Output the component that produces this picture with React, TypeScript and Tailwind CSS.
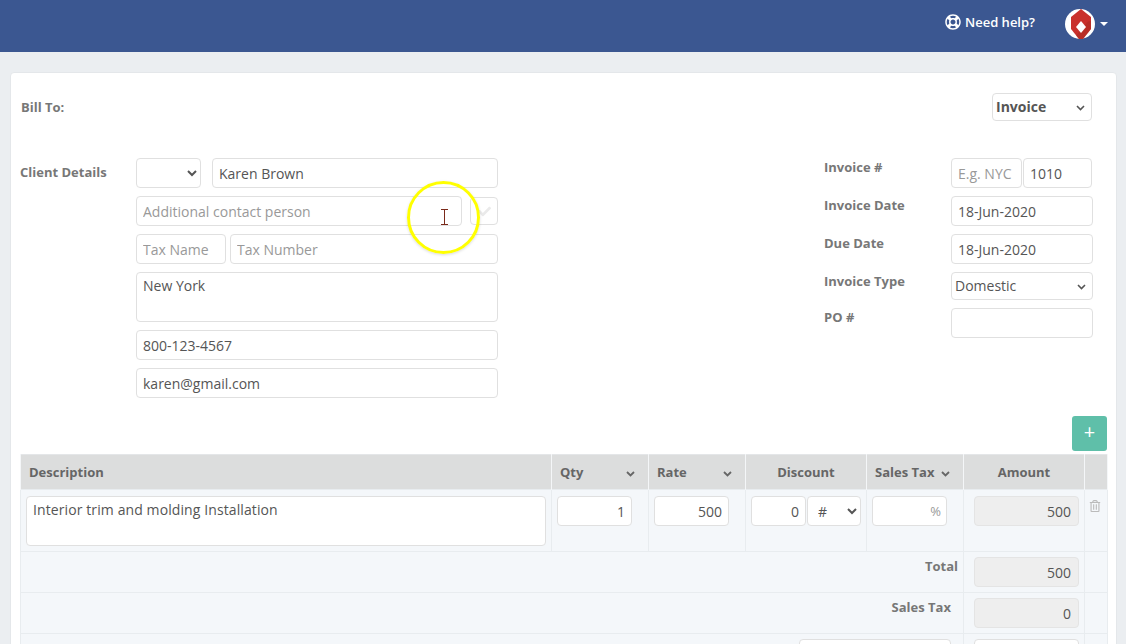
import { FaCheck, FaRegLifeRing, FaRegTrashAlt } from 'react-icons/fa';

const inputBase =
  'h-[30px] rounded-[4px] border border-[#e0e0e0] bg-white px-[6px] text-[14px] text-[#555] outline-none placeholder:text-[#999]';
const selectBase =
  'rounded-[4px] border border-[#e0e0e0] bg-white text-[14px] text-[#555] outline-none';
const amountBox =
  'ml-auto block h-[30px] w-[105px] rounded-[4px] border border-[#e4e4e4] bg-[#eeeeee] px-[7px] text-right text-[14px] text-[#555] outline-none';
const labelText = 'text-[13px] font-bold text-[#777]';
const th = 'h-[35px] border-x border-[#f4f6f8] bg-[#dcdddd] p-0 pt-[1px] text-[13px] font-bold text-[#666]';
const td = 'border border-[#e8ecef] align-top';

function SortArrow() {
  return (
    <svg width="9" height="6" viewBox="0 0 9 6" className="mt-[2px]">
      <path d="M1 1l3.5 3.5L8 1" fill="none" stroke="#666" strokeWidth="1.8" />
    </svg>
  );
}

function Logo() {
  return (
    <svg width="30" height="30" viewBox="0 0 30 30">
      <circle cx="15" cy="15" r="15" fill="#fff" />
      <path d="M16 0l10 8v12l-8 10h-4L6 20V8z" fill="#c9302c" />
      <path d="M26 12v8l-8 10h-4l-3-3.500 12-14z" fill="#a92b22" opacity="0.55" />
      <path d="M16 12l5 6-5 6-5-6z" fill="#fff" />
    </svg>
  );
}

function SmallSelect({ value, className }: { value: string; className: string }) {
  return (
    <div className="relative">
      <select
        className={`${selectBase} ${className} appearance-none pb-[2px] pl-[3px]`}
        defaultValue={value}
      >
        <option>{value}</option>
      </select>
      <svg
        width="9"
        height="6"
        viewBox="0 0 9 6"
        className="pointer-events-none absolute right-[7px] top-[12px]"
      >
        <path d="M1 1l3.5 3.5L8 1" fill="none" stroke="#555" strokeWidth="1.6" />
      </svg>
    </div>
  );
}

function RightRow({ label, children }: { label: string; children: React.ReactNode }) {
  return (
    <div className="flex">
      <div className={`w-[127px] ${labelText}`}>{label}</div>
      {children}
    </div>
  );
}

export default function App() {
  return (
    <div className="h-screen overflow-hidden bg-[#ebeef1] font-['Open_Sans',sans-serif]">
      {/* Top bar */}
      <header className="flex h-[52px] items-center justify-end bg-[#3b5791] pr-[18px] text-white">
        <a className="mr-[30px] flex items-center gap-[4px] pb-[7px] text-[13px] font-semibold">
          <FaRegLifeRing className="-mt-[2px] text-[16px]" />
          Need help?
        </a>
        <div className="flex items-center gap-[5px] pb-[4px]">
          <Logo />
          <svg width="8" height="4" viewBox="0 0 8 4">
            <path d="M0 0h8L4 4z" fill="#fff" />
          </svg>
        </div>
      </header>

      <main className="ml-[10px] mr-[9px] mt-[20px] rounded-[4px] border border-[#e4e7ea] bg-white pl-[9px] pr-[9px] pt-[20px]">
        <div className="flex h-[28px] items-center justify-between pr-[15px]">
          <span className={`pl-[1px] pt-[2px] ${labelText}`}>Bill To:</span>
          <SmallSelect value="Invoice" className="h-[28px] w-[100px] font-bold" />
        </div>

        <div className="mt-[37px] flex justify-between pr-[14px]">
          {/* Client details */}
          <div className="flex">
            <div className={`w-[116px] pt-[5px] ${labelText}`}>Client Details</div>
            <div className="flex w-[362px] flex-col gap-[8px]">
              <div className="flex gap-[11px]">
                <select className={`${selectBase} h-[30px] w-[65px]`} />
                <input className={`${inputBase} flex-1`} defaultValue="Karen Brown" />
              </div>
              <div className="flex items-center gap-[8px]">
                <input className={`${inputBase} w-[326px]`} placeholder="Additional contact person" />
                <div className="flex h-[28px] w-[28px] items-center justify-center rounded-[4px] border border-[#e0e0e0]">
                  <FaCheck className="text-[13px] text-[#eaeaea]" />
                </div>
              </div>
              <div className="flex gap-[4px]">
                <input className={`${inputBase} w-[90px]`} placeholder="Tax Name" />
                <input className={`${inputBase} flex-1`} placeholder="Tax Number" />
              </div>
              <textarea className={`${inputBase} h-[50px] resize-none py-[2px]`} defaultValue="New York" />
              <input className={inputBase} defaultValue="800-123-4567" />
              <input className={inputBase} defaultValue="karen@gmail.com" />
            </div>
          </div>

          {/* Invoice details */}
          <div className="flex w-[269px] flex-col gap-[8px]">
            <RightRow label="Invoice #">
              <div className="flex gap-px">
                <input className={`${inputBase} w-[71px]`} placeholder="E.g. NYC" />
                <input className={`${inputBase} w-[69px]`} defaultValue="1010" />
              </div>
            </RightRow>
            <RightRow label="Invoice Date">
              <input className={`${inputBase} w-[142px]`} defaultValue="18-Jun-2020" />
            </RightRow>
            <RightRow label="Due Date">
              <input className={`${inputBase} w-[142px]`} defaultValue="18-Jun-2020" />
            </RightRow>
            <RightRow label="Invoice Type">
              <SmallSelect value="Domestic" className="h-[28px] w-[142px]" />
            </RightRow>
            <RightRow label="PO #">
              <input className={`${inputBase} w-[142px]`} />
            </RightRow>
          </div>
        </div>

        <div className="mt-[18px] flex justify-end">
          <button className="flex h-[35px] w-[35px] items-center justify-center rounded-[3px] bg-[#5fbfa9] pb-[3px] text-[20px] text-white">
            +
          </button>
        </div>

        {/* Line items */}
        <table className="mt-[3px] w-[1087px] table-fixed border-collapse border-t border-[#e4e6e8] bg-[#f4f7fa]">
          <colgroup>
            <col className="w-[531px]" />
            <col className="w-[97px]" />
            <col className="w-[97px]" />
            <col className="w-[121px]" />
            <col className="w-[97px]" />
            <col className="w-[121px]" />
            <col className="w-[23px]" />
          </colgroup>
          <thead>
            <tr>
              <th className={`${th} pl-[8px] text-left`}>Description</th>
              <th className={th}>
                <div className="flex items-center justify-between pl-[8px] pr-[13px]">
                  Qty <SortArrow />
                </div>
              </th>
              <th className={th}>
                <div className="flex items-center justify-between pl-[8px] pr-[13px]">
                  Rate <SortArrow />
                </div>
              </th>
              <th className={th}>Discount</th>
              <th className={th}>
                <div className="flex items-center justify-between pl-[8px] pr-[13px]">
                  Sales Tax <SortArrow />
                </div>
              </th>
              <th className={th}>Amount</th>
              <th className={th} />
            </tr>
          </thead>
          <tbody>
            <tr className="h-[62px]">
              <td className={`${td} px-[5px] pt-[6px]`}>
                <textarea
                  className={`${inputBase} block h-[50px] w-full resize-none py-[2px] tracking-[0.1px]`}
                  defaultValue="Interior trim and molding Installation"
                />
              </td>
              <td className={`${td} pl-[5px] pt-[6px]`}>
                <input className={`${inputBase} block w-[75px] text-right`} defaultValue="1" />
              </td>
              <td className={`${td} pl-[5px] pt-[6px]`}>
                <input className={`${inputBase} block w-[75px] text-right`} defaultValue="500" />
              </td>
              <td className={`${td} pl-[5px] pt-[6px]`}>
                <div className="flex gap-px">
                  <input className={`${inputBase} w-[55px] text-right`} defaultValue="0" />
                  <select className={`${selectBase} h-[30px] w-[54px] pl-[6px]`} defaultValue="#">
                    <option>#</option>
                  </select>
                </div>
              </td>
              <td className={`${td} pl-[5px] pt-[6px]`}>
                <div className="relative w-[75px]">
                  <input className={`${inputBase} block w-full`} />
                  <span className="absolute right-[6px] top-[6px] text-[13px] text-[#999]">%</span>
                </div>
              </td>
              <td className={`${td} pr-[5px] pt-[6px]`}>
                <input className={amountBox} defaultValue="500" readOnly />
              </td>
              <td className={`${td} pl-[4px] pt-[10px]`}>
                <FaRegTrashAlt className="text-[12px] text-[#bbb]" />
              </td>
            </tr>
            <tr className="h-[41px]">
              <td colSpan={5} className={`${td} pr-[5px] pt-[5px] text-right ${labelText}`}>
                Total
              </td>
              <td className={`${td} pr-[5px] pt-[5px]`}>
                <input className={amountBox} defaultValue="500" readOnly />
              </td>
              <td className={td} />
            </tr>
            <tr className="h-[41px]">
              <td colSpan={5} className={`${td} pr-[12px] pt-[5px] text-right ${labelText}`}>
                Sales Tax
              </td>
              <td className={`${td} pr-[5px] pt-[5px]`}>
                <input className={amountBox} defaultValue="0" readOnly />
              </td>
              <td className={td} />
            </tr>
            <tr className="h-[41px]">
              <td colSpan={5} className={`${td} pr-[12px] pt-[5px]`}>
                <input className={`${inputBase} ml-auto block w-[152px]`} />
              </td>
              <td className={`${td} pr-[5px] pt-[5px]`}>
                <input className={`${inputBase} ml-auto block w-[105px]`} />
              </td>
              <td className={td} />
            </tr>
          </tbody>
        </table>
      </main>

      {/* Screen recorder cursor highlight */}
      <div className="pointer-events-none absolute left-[407px] top-[181px] flex h-[73px] w-[73px] items-center justify-center rounded-full border-[3px] border-[#ffff00] shadow-[0_1px_3px_rgba(0,0,0,0.15)]">
        <svg width="8" height="16" viewBox="0 0 8 16" className="ml-[2px] -mt-[1px]">
          <path d="M0 .5h7M0 15.500h7M3.500 .5v15" fill="none" stroke="#7a2a1a" strokeWidth="1" />
        </svg>
      </div>
    </div>
  );
}
